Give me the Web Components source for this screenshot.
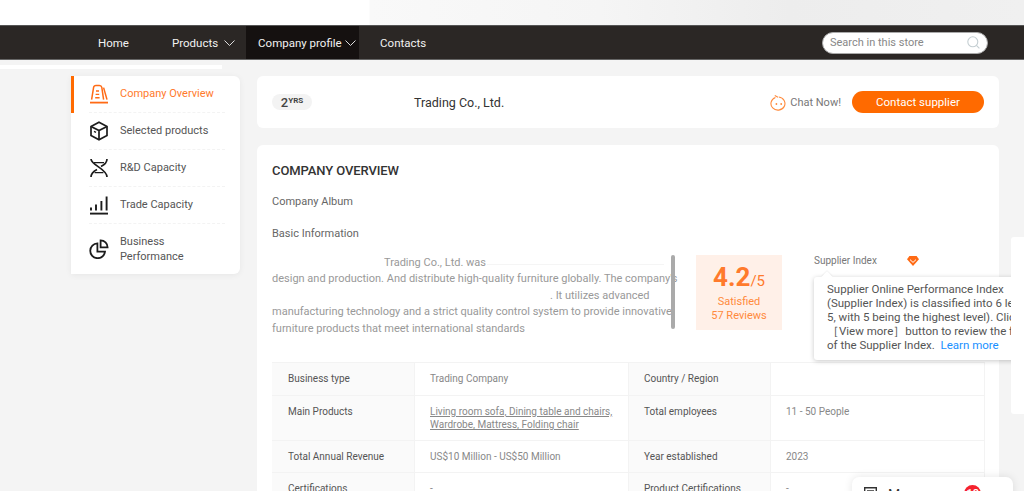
<!DOCTYPE html>
<html lang="en">
<head>
<meta charset="utf-8">
<title>Company profile</title>
<style>
  html, body {
    margin: 0;
    height: 491px;
    overflow: hidden;
    background: #f4f4f4;
    font-family: Roboto, "Liberation Sans", sans-serif;
  }
  .columns {
    display: flex;
    gap: 17px;
    align-items: flex-start;
    padding: 7px 0 0 71px;
  }
</style>
</head>
<body>
<store-banner></store-banner>
<store-nav></store-nav>
<div style="width:222px;height:4px;margin-top:5px;background:#fff"></div>
<div class="columns">
  <side-menu>
    <menu-item active label="Company Overview">
      <svg slot="icon" width="20" height="20" viewBox="0 0 20 20" fill="none" stroke="#ff6a14" stroke-width="1.5">
        <path d="M1 18.6h18" stroke-width="1.8"/>
        <path d="M2.6 15.6 4.6 3.4Q4.9 1.4 7 1.4h3.4q2 0 2.4 2l1.8 12.2"/>
        <path d="M14.6 3.6 18 15.6"/>
        <path d="M7 7h3M6.6 10.4h3.6M6.2 13.8h4.4" stroke-width="1.4"/>
      </svg>
    </menu-item>
    <menu-item label="Selected products">
      <svg slot="icon" width="20" height="20" viewBox="0 0 20 20" fill="none" stroke="#1c1c1c" stroke-width="1.7">
        <path d="M10 1.2 18 5.4v9.2l-8 4.2-8-4.2V5.4z"/>
        <path d="M2 5.4 10 9.6l8-4.2M10 9.6v9.2"/>
        <path d="M5 10.4l2 1" stroke-width="1.5"/>
      </svg>
    </menu-item>
    <menu-item label="R&amp;D Capacity">
      <svg slot="icon" width="20" height="20" viewBox="0 0 20 20" fill="none" stroke="#1c1c1c" stroke-width="1.7">
        <path d="M2 1c0 6 16 10 16 18"/>
        <path d="M18 1c0 4-3 6-6 7.6M8 11.4C5 13 2 15 2 19"/>
        <path d="M2.4 3.6h15.2" stroke-dasharray="0" opacity="0"/>
        <path d="M5 4.6h10M5.6 14.6h8.8" stroke-width="1.4"/>
      </svg>
    </menu-item>
    <menu-item label="Trade Capacity">
      <svg slot="icon" width="20" height="20" viewBox="0 0 20 20" fill="none" stroke="#1c1c1c" stroke-width="1.9">
        <path d="M1 18.6h18"/>
        <path d="M2 15.6v-3M7 15.6V9.6M12.4 15.6V6M17.6 15.6V1.4"/>
      </svg>
    </menu-item>
    <menu-item label="Business Performance">
      <svg slot="icon" width="20" height="20" viewBox="0 0 20 20" fill="none" stroke="#1c1c1c" stroke-width="1.8">
        <path d="M8.4 4.4a7.4 7.4 0 1 0 7.6 8.2H8.4z"/>
        <path d="M11.6 1.4a7 7 0 0 1 7 7h-7z"/>
      </svg>
    </menu-item>
  </side-menu>
  <div class="main" style="display:flex;flex-direction:column;gap:17px;width:742px">
    <company-header></company-header>
    <overview-card></overview-card>
  </div>
</div>
<side-panel></side-panel>
<messenger-tab></messenger-tab>

<script>
const defineEl = (name, html, setup) => {
  const template = window.document.createElement('template');
  template.innerHTML = html;
  customElements.define(name, class extends HTMLElement {
    constructor() {
      super();
      this.attachShadow({mode: 'open'}).append(template.content.cloneNode(true));
      if (setup) setup(this);
    }
  });
};

defineEl('store-banner', `
<style>
  :host {
    display: block;
    height: 25px;
    background: linear-gradient(90deg, #fff 0, #fff 369px, #f9f9f9 370px, #f5f5f5 600px, #ededed 790px, #f0f0f0 1024px);
  }
</style>`);

defineEl('store-nav', `
<style>
  :host {
    display: flex;
    align-items: stretch;
    height: 33px;
    padding-left: 86px;
    padding-right: 36px;
    background: #2b2725;
    border-top: 1px solid #555;
    border-bottom: 1px solid #666;
    color: #f2f2f2;
    font-size: 11.5px;
  }
  a {
    display: flex;
    align-items: center;
    gap: 6px;
    padding: 0 12px;
    white-space: nowrap;
  }
  .home { margin-right: 19px; }
  .products { margin-right: 0; padding-right: 11px; }
  .current { background: #151110; gap: 3px; width: 89px; margin-right: 9px; padding-right: 12px; }
  svg { flex: none; }
  .search {
    margin-left: auto;
    align-self: center;
    display: flex;
    align-items: center;
    justify-content: space-between;
    box-sizing: border-box;
    width: 166px;
    height: 22px;
    padding: 0 7px;
    border: 1px solid #aaa;
    border-radius: 11px;
    background: #fff;
    color: #888;
    font-size: 11px;
  }
</style>
<a class="home">Home</a>
<a class="products">Products
  <svg width="11" height="6" viewBox="0 0 11 6" fill="none" stroke="#ddd"><path d="M.5.5l5 5 5-5"/></svg>
</a>
<a class="current">Company profile
  <svg width="11" height="6" viewBox="0 0 11 6" fill="none" stroke="#ddd"><path d="M.5.5l5 5 5-5"/></svg>
</a>
<a>Contacts</a>
<div class="search">
  <span>Search in this store</span>
  <svg width="13" height="13" viewBox="0 0 13 13" fill="none" stroke="#c4ced2" stroke-width="1.1"><circle cx="5.8" cy="5.8" r="5"/><path d="M9.4 9.4l3 3"/></svg>
</div>`);

defineEl('side-menu', `
<style>
  :host {
    display: block;
    flex: none;
    width: 169px;
    background: #fff;
    border-radius: 0 6px 6px 0;
    box-shadow: 0 1px 6px rgba(0, 0, 0, .06);
  }
</style>
<slot></slot>`);

defineEl('menu-item', `
<style>
  :host {
    display: block;
    position: relative;
    padding: 0 15px 0 18px;
    color: #555;
    font-size: 11px;
    line-height: 15.5px;
  }
  .row {
    display: flex;
    align-items: center;
    gap: 11px;
    box-sizing: border-box;
    min-height: 37px;
    padding: 0;
    border-bottom: 1px dashed #f3f3f3;
  }
  :host(:last-child) .row { border-bottom: 0; min-height: 50px; }
  :host([active]) { color: #ff7a2c; }
  :host([active])::before {
    content: "";
    position: absolute;
    left: 0;
    top: 0;
    bottom: 0;
    width: 3px;
    background: #ff6a00;
  }
  ::slotted(svg) { flex: none; }
  .text { width: 100px; }
</style>
<div class="row"><slot name="icon"></slot><span class="text"></span></div>`, el => {
  el.shadowRoot.querySelector('.text').textContent = el.getAttribute('label');
});

defineEl('company-header', `
<style>
  :host {
    display: flex;
    align-items: center;
    height: 52px;
    padding: 0 15px;
    background: #fff;
    border-radius: 6px;
    color: #333;
  }
  .years {
    display: flex;
    align-items: center;
    justify-content: center;
    flex: none;
    box-sizing: border-box;
    width: 40px;
    height: 16px;
    margin-right: 102px;
    border-radius: 8px;
    background: #f3f3f3;
    color: #444;
    font-size: 13px;
    font-weight: 500;
  }
  .years span { font-size: 8px; font-weight: 700; margin-bottom: 3px; }
  .name { font-size: 12.5px; }
  .chat {
    display: flex;
    align-items: center;
    gap: 3px;
    margin-left: auto;
    color: #777;
    font-size: 11px;
  }
  button {
    width: 132px;
    height: 22px;
    margin-left: 11px;
    padding: 0;
    border: 0;
    border-radius: 11px;
    background: #ff6a00;
    color: #fff;
    font: 11.5px Roboto, sans-serif;
  }
</style>
<div class="years">2<span>YRS</span></div>
<div class="name">Trading Co., Ltd.</div>
<div class="chat">
  <svg width="17" height="17" viewBox="0 0 17 17" fill="none" stroke="#ff8a3c" stroke-width="1.1">
    <path d="M4.8 1.4 8 3.2"/><path d="M5.4 3.4a7 6.6 0 1 0 3.4-.4"/>
    <circle cx="6.4" cy="10" r=".9" fill="#ff8a3c" stroke="none"/><circle cx="11.2" cy="10" r=".9" fill="#ff8a3c" stroke="none"/>
  </svg>
  Chat Now!
</div>
<button>Contact supplier</button>`);

defineEl('score-box', `
<style>
  :host {
    display: block;
    flex: none;
    box-sizing: border-box;
    width: 86px;
    height: 75px;
    padding-top: 7px;
    background: #fff0e8;
    color: #ff8a3c;
    font-size: 11px;
    line-height: 13.5px;
    text-align: center;
  }
  .score {
    height: 31px;
    margin-bottom: 2px;
    color: #ff7a2c;
    font-size: 15px;
    line-height: 31px;
  }
  b { font-size: 26px; font-weight: 700; }
</style>
<div class="score"><b>4.2</b>/5</div>
<div>Satisfied</div>
<div>57 Reviews</div>`);

defineEl('index-tooltip', `
<style>
  :host {
    display: block;
    position: absolute;
    top: 22px;
    left: 0;
    box-sizing: border-box;
    width: 240px;
    height: 83px;
    padding: 6px 0 0 13px;
    background: #fff;
    border-radius: 3px;
    box-shadow: 0 1px 5px rgba(0, 0, 0, .22);
    color: #555;
    font-size: 11.5px;
    line-height: 13.9px;
    white-space: nowrap;
  }
  :host::before {
    content: "";
    position: absolute;
    left: 9px;
    top: -4px;
    width: 8px;
    height: 8px;
    background: #fff;
    transform: rotate(45deg);
    box-shadow: -1px -1px 1px rgba(0, 0, 0, .05);
  }
  a { color: #1890ff; }
  div { position: relative; }
</style>
<div>Supplier Online Performance Index<br>(Supplier Index) is classified into 6 levels (0-<br>5, with 5 being the highest level). Click the<br>［View more］button to review the formula<br>of the Supplier Index. &nbsp;<a>Learn more</a></div>`);

defineEl('supplier-index', `
<style>
  :host {
    display: block;
    position: relative;
    flex: none;
    width: 210px;
    color: #777;
    font-size: 10px;
  }
  .head {
    display: flex;
    align-items: center;
    justify-content: space-between;
    width: 105px;
    height: 11px;
  }
</style>
<div class="head">
  Supplier Index
  <svg width="12" height="10" viewBox="0 0 12 10"><path d="M2.4 0h7.2L12 3.2 6 10 0 3.2z" fill="#ff6a14"/><path d="M3 3.6 6 6.4 9 3.6" fill="none" stroke="#fff" stroke-width="1"/></svg>
</div>
<index-tooltip></index-tooltip>`);

defineEl('overview-text', `
<style>
  :host {
    display: block;
    position: relative;
    flex: none;
    width: 403px;
    height: 80px;
    color: #999;
    font-size: 11px;
    line-height: 16.4px;
    white-space: nowrap;
  }
  .first {
    position: relative;
    width: 103px;
    margin-left: 112px;
    overflow: hidden;
  }
  .third { margin-left: 278px; }
  .rule {
    position: absolute;
    left: 215px;
    top: 9px;
    width: 177px;
    height: 1px;
    background: #f5f5f5;
  }
  .thumb {
    position: absolute;
    left: 399px;
    top: 0;
    width: 4px;
    height: 74px;
    border-radius: 2px;
    background: #aaa;
  }
</style>
<div class="first">Trading Co., Ltd. was established</div>
<div class="rule"></div>
<div>design and production. And distribute high-quality furniture globally. The company's</div>
<div class="third">. It utilizes advanced</div>
<div>manufacturing technology and a strict quality control system to provide innovative</div>
<div>furniture products that meet international standards</div>
<div class="thumb"></div>`);

defineEl('info-table', `
<style>
  :host {
    display: grid;
    grid-template-columns: 143px 214px 142px 214px;
    grid-auto-rows: auto;
    width: 713px;
    border-top: 1px solid #f3f3f3;
    color: #888;
    font-size: 10px;
    line-height: 13.5px;
  }
  div {
    box-sizing: border-box;
    padding: 9px 15px;
    border-bottom: 1px solid #f3f3f3;
    border-right: 1px solid #f3f3f3;
  }
  .k { background: #fafafa; color: #555; padding-left: 16px; }
  u { text-decoration: underline; }
</style>
<div class="k">Business type</div><div>Trading Company</div><div class="k" style="padding-left:15px">Country / Region</div><div></div>
<div class="k" style="padding-bottom:8px">Main Products</div><div style="padding-bottom:8px"><u>Living room sofa, Dining table and chairs, Wardrobe, Mattress, Folding chair</u></div><div class="k" style="padding-left:15px">Total employees</div><div>11 - 50 People</div>
<div class="k">Total Annual Revenue</div><div>US$10 Million - US$50 Million</div><div class="k" style="padding-left:15px">Year established</div><div>2023</div>
<div class="k">Certifications</div><div>-</div><div class="k" style="padding-left:15px">Product Certifications</div><div>-</div>`);

defineEl('overview-card', `
<style>
  :host {
    display: block;
    box-sizing: border-box;
    height: 360px;
    padding: 17px 15px 0;
    background: #fff;
    border-radius: 6px;
  }
  h2 {
    margin: 0 0 15px;
    color: #333;
    font-size: 13px;
    font-weight: 500;
    line-height: 17px;
    letter-spacing: -.1px;
  }
  h3 {
    margin: 0 0 17px;
    color: #666;
    font-size: 11px;
    font-weight: 400;
    line-height: 15px;
  }
  .info {
    display: flex;
    align-items: flex-start;
    margin: 0 0 32px;
    height: 75px;
  }
  score-box { margin-left: 21px; margin-right: 32px; }
</style>
<h2>COMPANY OVERVIEW</h2>
<h3>Company Album</h3>
<h3 style="margin-bottom:14px">Basic Information</h3>
<div class="info">
  <overview-text></overview-text>
  <score-box></score-box>
  <supplier-index></supplier-index>
</div>
<info-table></info-table>`);

defineEl('side-panel', `
<style>
  :host {
    position: absolute;
    left: 1011px;
    top: 237px;
    width: 13px;
    height: 177px;
    background: #fff;
    border-radius: 3px 0 0 3px;
  }
</style>`);

defineEl('messenger-tab', `
<style>
  :host {
    display: flex;
    align-items: flex-start;
    position: absolute;
    left: 852px;
    top: 477px;
    box-sizing: border-box;
    width: 161px;
    height: 40px;
    padding: 10px 0 0 12px;
    background: #fff;
    border-radius: 7px 7px 0 0;
    box-shadow: 0 0 8px rgba(0, 0, 0, .1);
    color: #333;
    font-size: 14px;
    line-height: 16px;
  }
  svg { flex: none; margin-right: 11px; }
  i {
    flex: none;
    margin-left: 7px;
    margin-top: -2px;
    width: 17px;
    height: 17px;
    border-radius: 50%;
    background: #f5222d;
    color: #fff;
    font: 500 11px/17px Roboto, sans-serif;
    text-align: center;
  }
</style>
<svg width="13" height="14" viewBox="0 0 13 14" fill="none" stroke="#333" stroke-width="1.4"><path d="M.7.7h11.6v12.6H.7zM3 4h7M3 7h7"/></svg>
Messenger
<i>18</i>`);
</script>
</body>
</html>
